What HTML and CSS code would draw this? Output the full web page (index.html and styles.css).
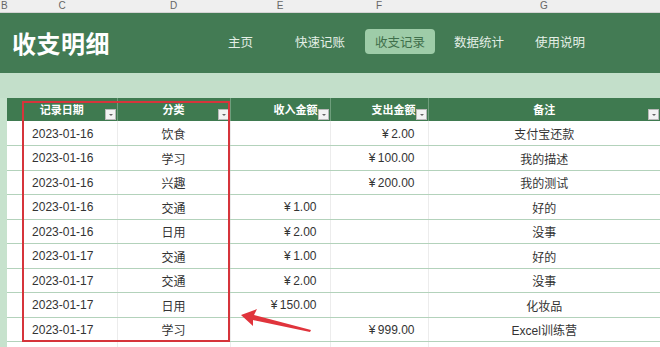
FILE: index.html
```html
<!DOCTYPE html>
<html lang="zh-CN">
<head>
  <meta charset="UTF-8">
  <title>收支明细</title>
  <link rel="stylesheet" href="styles.css">
</head>
<body>
<div class="sheet">
  <div class="col-letters">
    <span class="letter-b">B</span>
    <span>C</span>
    <span>D</span>
    <span>E</span>
    <span>F</span>
    <span>G</span>
  </div>

  <header class="banner">
    <h1>收支明细</h1>
    <nav class="nav">
      <a href="#" class="nav-home">主页</a>
      <a href="#" class="nav-quick">快速记账</a>
      <a href="#" class="nav-active">收支记录</a>
      <a href="#" class="nav-stats">数据统计</a>
      <a href="#" class="nav-help">使用说明</a>
    </nav>
  </header>

  <div class="band"></div>

  <div class="table-wrap">
    <table class="records">
      <colgroup>
        <col class="c-date">
        <col class="c-cat">
        <col class="c-in">
        <col class="c-out">
        <col class="c-note">
      </colgroup>
      <thead>
        <tr>
          <th>记录日期<span class="filter"></span></th>
          <th>分类<span class="filter"></span></th>
          <th class="num">收入金额<span class="filter"></span></th>
          <th class="num">支出金额<span class="filter"></span></th>
          <th>备注<span class="filter"></span></th>
        </tr>
      </thead>
      <tbody>
        <tr><td>2023-01-16</td><td>饮食</td><td class="num"></td><td class="num">¥&thinsp;2.00</td><td>支付宝还款</td></tr>
        <tr><td>2023-01-16</td><td>学习</td><td class="num"></td><td class="num">¥&thinsp;100.00</td><td>我的描述</td></tr>
        <tr><td>2023-01-16</td><td>兴趣</td><td class="num"></td><td class="num">¥&thinsp;200.00</td><td>我的测试</td></tr>
        <tr><td>2023-01-16</td><td>交通</td><td class="num">¥&thinsp;1.00</td><td class="num"></td><td>好的</td></tr>
        <tr><td>2023-01-16</td><td>日用</td><td class="num">¥&thinsp;2.00</td><td class="num"></td><td>没事</td></tr>
        <tr><td>2023-01-17</td><td>交通</td><td class="num">¥&thinsp;1.00</td><td class="num"></td><td>好的</td></tr>
        <tr><td>2023-01-17</td><td>交通</td><td class="num">¥&thinsp;2.00</td><td class="num"></td><td>没事</td></tr>
        <tr><td>2023-01-17</td><td>日用</td><td class="num">¥&thinsp;150.00</td><td class="num"></td><td>化妆品</td></tr>
        <tr><td>2023-01-17</td><td>学习</td><td class="num"></td><td class="num">¥&thinsp;999.00</td><td>Excel训练营</td></tr>
        <tr class="blank"><td></td><td></td><td></td><td></td><td></td></tr>
      </tbody>
    </table>

    <!-- 标注：红框和箭头 -->
    <div class="highlight"></div>
    <svg class="arrow" width="80" height="30" viewBox="0 0 80 30">
      <polygon points="0,6 16,0 13,6 70,21 69,23 12,11 12,17" fill="#e0343c"/>
    </svg>
  </div>
</div>
</body>
</html>
```

FILE: styles.css
```css
* {
  box-sizing: border-box;
}
body {
  margin: 0;
  font-family: "Liberation Sans", "Noto Sans CJK SC", sans-serif;
  background-color: #fff;
}
.sheet {
  width: 660px;
  height: 347px;
  overflow: hidden;
  position: relative;
}

/* excel column letters */
.col-letters {
  display: grid;
  grid-template-columns: 7px 110px 113px 100px 98px 232px;
  height: 13px;
  background-color: #efefef;
  border-bottom: 1px solid #d4d4d4;
  font-size: 10px;
  line-height: 12px;
  color: #666;
  text-align: center;
}
.col-letters .letter-b {
  text-align: left;
  padding-left: 1px;
}

/* green banner */
.banner {
  display: flex;
  align-items: center;
  height: 60px;
  background-color: #437b54;
  padding-left: 12px;
  padding-bottom: 3px;
}
.banner h1 {
  margin: 0;
  font-family: "Noto Sans CJK SC", sans-serif;
  font-size: 24px;
  font-weight: 700;
  color: #fff;
  letter-spacing: 0.5px;
  width: 216px;
  padding-top: 1px;
}
.nav {
  display: flex;
  align-items: center;
  font-family: "Noto Sans CJK SC", sans-serif;
  font-size: 12.5px;
}
.nav a {
  text-decoration: none;
  color: #e4efe6;
  line-height: 25px;
}
.nav-home {
  margin-right: 42px;
}
.nav-quick {
  margin-right: 20px;
}
.nav-active {
  background-color: #9ecca8;
  color: #3f6f4b !important;
  border-radius: 4px;
  padding: 0 10px;
  margin-right: 19px;
}
.nav-stats {
  margin-right: 31px;
}

.band {
  height: 25px;
  background-color: #c3dfca;
}

/* table */
.table-wrap {
  position: relative;
  background-color: #c7e2cd;
  padding-left: 7px;
}
.records {
  border-collapse: collapse;
  table-layout: fixed;
  width: 653px;
  background-color: #fff;
  font-size: 12px;
  color: #333;
}
.c-date { width: 110px; }
.c-cat { width: 113px; }
.c-in { width: 100px; }
.c-out { width: 98px; }
.c-note { width: 232px; }

.records th {
  position: relative;
  height: 23px;
  background-color: #3f7a50;
  color: #fff;
  font-family: "Noto Sans CJK SC", sans-serif;
  font-weight: 700;
  font-size: 11px;
  text-align: center;
  padding: 0 0 2px 0;
  border-left: 1px solid #6f9e7c;
}
.records th:first-child {
  border-left: none;
}
.records th.num {
  text-align: right;
  padding-right: 12px;
}
.filter {
  position: absolute;
  right: 1px;
  bottom: 1px;
  width: 11px;
  height: 11px;
  background-color: #f3f3f3;
  border: 1px solid #b9b9b9;
}
.filter::after {
  content: "";
  position: absolute;
  left: 3px;
  top: 4px;
  border-left: 2px solid transparent;
  border-right: 2px solid transparent;
  border-top: 2px solid #666;
}
.records td {
  height: 24.5px;
  padding: 1px 0 0 0;
  text-align: center;
  border-bottom: 1px solid #b3d2bb;
  border-left: 1px solid #ececec;
}
.records td:first-child {
  border-left: none;
  padding-left: 2px;
}
.records td.num {
  text-align: right;
  padding-right: 13px;
}

.highlight {
  position: absolute;
  left: 22px;
  top: 3px;
  width: 208px;
  height: 241px;
  border: 2px solid #d6343b;
}
.arrow {
  position: absolute;
  left: 241px;
  top: 211px;
}
```
